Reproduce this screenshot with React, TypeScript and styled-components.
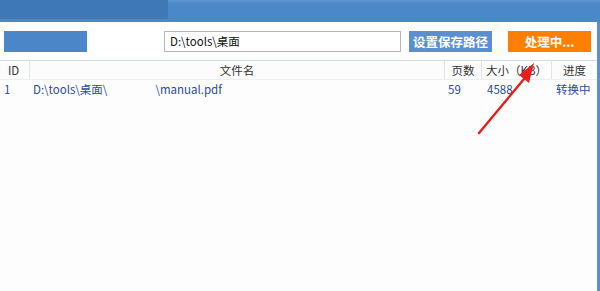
import { FC } from 'react';
import styled, { createGlobalStyle } from 'styled-components';

const GlobalStyle = createGlobalStyle`
  html, body {
    margin: 0;
    padding: 0;
    background: #ffffff;
  }
  body {
    font-family: "Microsoft YaHei", "Noto Sans CJK SC", "Liberation Sans", sans-serif;
  }
`;

const Window = styled.div`
  position: relative;
  width: 600px;
  height: 291px;
  overflow: hidden;
  display: flex;
  flex-direction: column;
  background: #fdfdfd;
`;

const TitleBar = styled.div`
  height: 22px;
  flex: none;
  background: linear-gradient(#5e97d2 0px, #4b88c9 4px, #4b88c9 100%);
  display: flex;
  align-items: flex-start;
`;

const TitleMask = styled.div`
  width: 168px;
  height: 19px;
  background: #3f78b6;
  border-bottom-right-radius: 2px;
`;

const Body = styled.div`
  flex: 1;
  display: flex;
  flex-direction: column;
  border-right: 3px solid #5b8fcf;
`;

const Toolbar = styled.div`
  height: 38px;
  flex: none;
  display: flex;
  align-items: center;
  padding: 0 6px 0 4px;
  background: #ffffff;
  border-bottom: 1px solid #d4dbe3;
`;

const LogoMask = styled.div`
  width: 83px;
  height: 21px;
  background: #4b87c8;
`;

const PathInput = styled.div`
  margin-left: 77px;
  width: 230px;
  height: 19px;
  border: 1px solid #b7b7b7;
  padding-left: 5px;
  font-size: 11.5px;
  line-height: 19px;
  color: #111;
  background: #fff;
`;

const Button = styled.div<{ tone: 'blue' | 'orange' }>`
  width: 83px;
  height: 21px;
  display: flex;
  align-items: center;
  justify-content: center;
  font-size: 12.5px;
  font-weight: bold;
  color: #ffffff;
  background: ${(p) => (p.tone === 'blue' ? '#5b8fd0' : '#ff8000')};
  margin-left: ${(p) => (p.tone === 'blue' ? '8px' : '16px')};
`;

const Grid = styled.div`
  display: grid;
  grid-template-columns: 29px 415px 37px 70px 1fr;
`;

const HeadRow = styled(Grid)`
  height: 18px;
  background: #fcfcfc;
  border-bottom: 1px solid #eceff2;
`;

const HeadCell = styled.div<{ align?: 'left' | 'center' }>`
  font-size: 11.5px;
  line-height: 18px;
  color: #333;
  text-align: ${(p) => p.align || 'center'};
  padding-left: ${(p) => (p.align === 'left' ? '8px' : '0')};
  border-left: 1px solid #e4e4e4;
  &:first-child {
    border-left: none;
  }
`;

const DataRow = styled(Grid)`
  height: 19px;
`;

const Cell = styled.div<{ pad?: number }>`
  font-size: 11.5px;
  line-height: 19px;
  color: #2d4b9b;
  padding-left: ${(p) => p.pad ?? 4}px;
  white-space: pre;
`;

const Gap = styled.span`
  display: inline-block;
  width: 48px;
`;

const Arrow = styled.svg`
  position: absolute;
  left: 470px;
  top: 55px;
`;

type Row = { id: number; dir: string; file: string; pages: number; size: number; state: string };

const rows: Row[] = [
  { id: 1, dir: 'D:\\tools\\桌面\\', file: '\\manual.pdf', pages: 59, size: 4588, state: '转换中' },
];

const App: FC = () => {
  return (
    <Window>
      <GlobalStyle />
      <TitleBar>
        <TitleMask />
      </TitleBar>
      <Body>
        <Toolbar>
          <LogoMask />
          <PathInput>D:\tools\桌面</PathInput>
          <Button tone="blue">设置保存路径</Button>
          <Button tone="orange">处理中...</Button>
        </Toolbar>
        <HeadRow>
          <HeadCell align="left">ID</HeadCell>
          <HeadCell>文件名</HeadCell>
          <HeadCell>页数</HeadCell>
          <HeadCell>大小（KB）</HeadCell>
          <HeadCell>进度</HeadCell>
        </HeadRow>
        {rows.map((r) => (
          <DataRow key={r.id}>
            <Cell>{r.id}</Cell>
            <Cell>
              {r.dir}
              <Gap />
              {r.file}
            </Cell>
            <Cell>{r.pages}</Cell>
            <Cell pad={6}>{r.size}</Cell>
            <Cell pad={5}>{r.state}</Cell>
          </DataRow>
        ))}
      </Body>
      <Arrow width="80" height="85" viewBox="0 0 80 85">
        <line x1="9" y1="78" x2="54" y2="24" stroke="#e61e1e" strokeWidth="2.4" strokeLinecap="round" />
        <polygon points="64,8 49,20 59,28" fill="#e61e1e" />
      </Arrow>
    </Window>
  );
};

export default App;
